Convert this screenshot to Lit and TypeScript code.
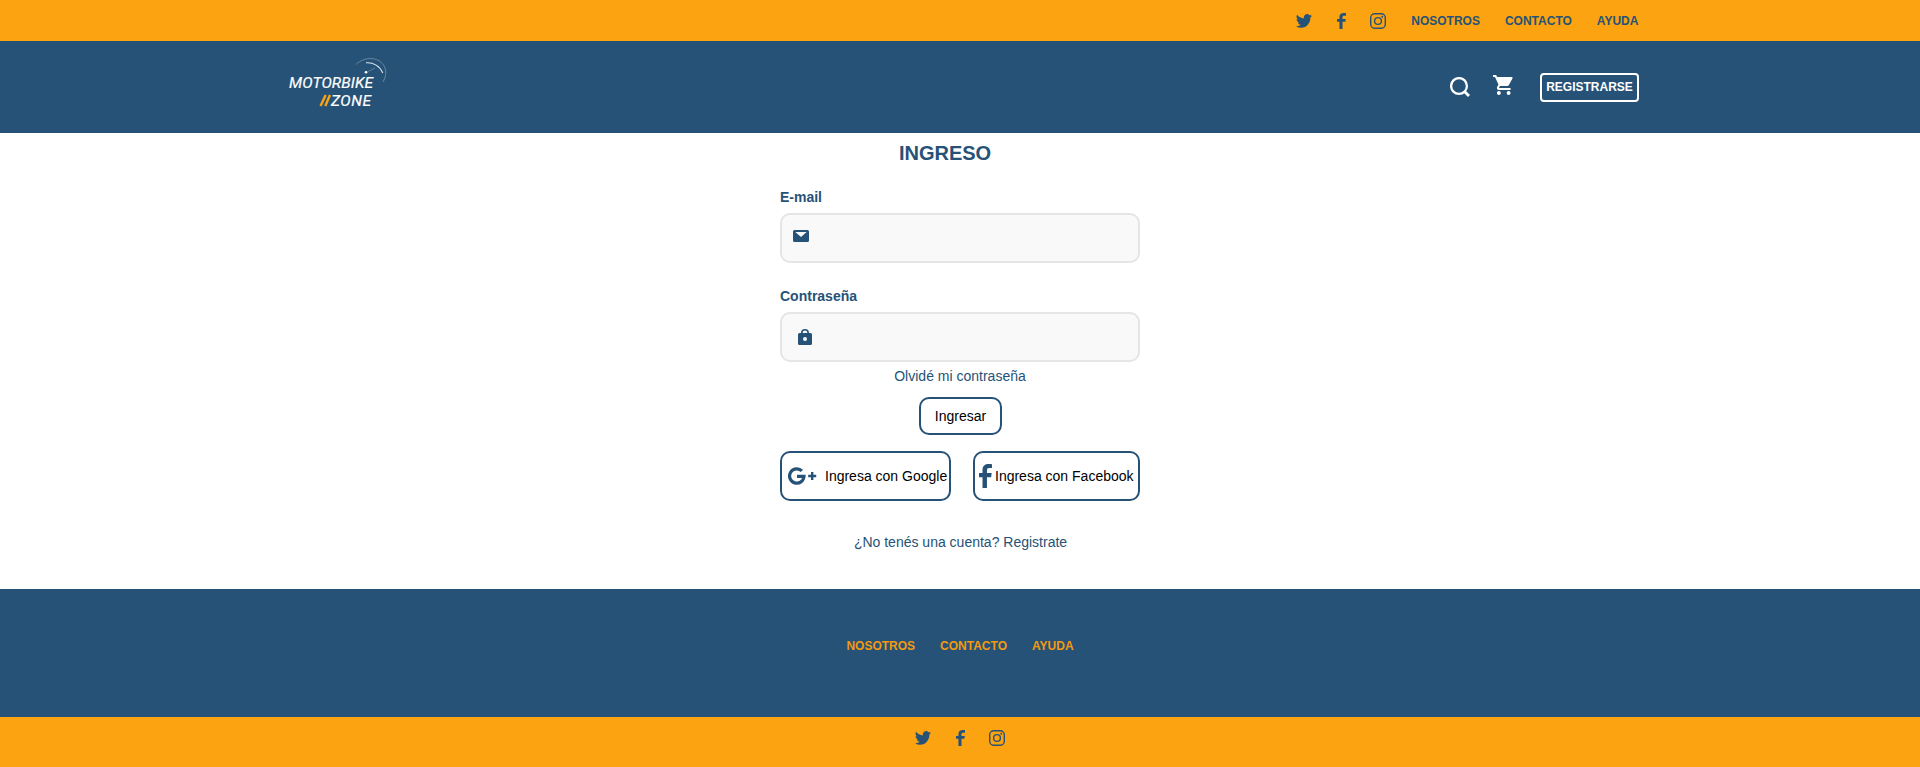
import { LitElement, html, css, svg } from "lit";
import { customElement } from "lit/decorators.js";

const twitter = svg`<path d="M23.95 4.57a10 10 0 0 1-2.82.77 4.96 4.96 0 0 0 2.16-2.72c-.95.55-2 .95-3.13 1.18a4.92 4.92 0 0 0-8.38 4.48C7.69 8.1 4.07 6.13 1.64 3.16a4.92 4.92 0 0 0 1.52 6.57 4.9 4.9 0 0 1-2.23-.61v.06a4.92 4.92 0 0 0 3.95 4.83 5 5 0 0 1-2.21.08 4.94 4.94 0 0 0 4.6 3.42A9.87 9.87 0 0 1 0 19.54a13.99 13.99 0 0 0 7.55 2.21c9.05 0 14-7.5 14-13.98 0-.21 0-.42-.02-.63a9.94 9.94 0 0 0 2.46-2.55z"/>`;
const facebook = svg`<path d="M5.2 16V8.8H7.9L8.3 6H5.2V4.2c0-.9.4-1.5 1.6-1.5H8.5V.1C8.2.1 7.300 0 6.300 0 4 0 2.300 1.300 2.300 3.800V6H0v2.800h2.300V16z"/>`;
const instagram = svg`<rect x=".7" y=".7" width="14.6" height="14.600" rx="4" fill="none" stroke="currentColor" stroke-width="1.400"/><circle cx="8" cy="8" r="3.400" fill="none" stroke="currentColor" stroke-width="1.400"/><circle cx="12.300" cy="3.700" r=".95"/>`;

const socials = () => html`
  <svg class="tw" viewBox="0 2 24 20" preserveAspectRatio="none">${twitter}</svg>
  <svg class="fb" viewBox="0 0 8.5 16" preserveAspectRatio="none">${facebook}</svg>
  <svg class="ig" viewBox="0 0 16 16">${instagram}</svg>`;

const links = () => html`<a>NOSOTROS</a><a>CONTACTO</a><a>AYUDA</a>`;

@customElement("app-root")
export class AppRoot extends LitElement {
  static styles = css`
    :host { display: block; height: 767px; background: #fff; color: #265277; font: 14px/16px "Liberation Sans", Arial, sans-serif; }
    * { box-sizing: border-box; }
    svg { display: block; fill: currentColor; flex: none; }
    .socials { display: flex; align-items: center; }
    .tw { width: 16px; height: 14px; }
    .fb { width: 9px; height: 16px; margin-left: 25px; }
    .ig { width: 16px; height: 16px; margin-left: 24px; }
    .links { display: flex; gap: 25px; font-size: 12px; font-weight: 700; line-height: 14px; }
    .top { height: 41px; background: #fca311; display: flex; justify-content: flex-end; align-items: center; padding: 0 281.6px 0 0; }
    .top .links { margin-left: 25px; }
    .head { height: 92px; background: #265277; color: #fff; display: flex; justify-content: space-between; align-items: flex-start; padding: 14px 281px 0 285px; }
    .logo { width: 110px; height: 60px; }
    .logo text { font-family: Roboto, sans-serif; font-style: italic; font-weight: 400; fill: #fff; stroke: #fff; stroke-width: .2px; }
    .tools { display: flex; align-items: flex-start; }
    .search { width: 20px; height: 20px; margin-top: 22px; }
    .cart { width: 20px; height: 20px; margin: 20px 0 0 23px; }
    .register { width: 99px; height: 29px; margin: 18px 0 0 27px; border: 2px solid #fff; border-radius: 4px; font-size: 12px; font-weight: 700; line-height: 24px; text-align: center; }
    .main { height: 456px; width: 360px; margin: 0 auto; display: flex; flex-direction: column; align-items: center; }
    h1 { margin: 8px 30px 0 0; font-size: 20px; line-height: 24px; }
    label { align-self: flex-start; font-weight: 700; }
    .l1 { margin-top: 24px; }
    .l2 { margin-top: 25px; }
    .field { width: 360px; height: 50px; margin-top: 8px; border: 2px solid #e5e5e5; border-radius: 10px; background: #f9f9f9; }
    .mail { width: 16px; height: 12px; margin: 15px 0 0 11px; }
    .lock { width: 14px; height: 16px; margin: 15px 0 0 16px; }
    .forgot { margin-top: 6px; }
    .btn { border: 2px solid #265277; border-radius: 10px; color: #000; display: flex; align-items: center; white-space: nowrap; }
    .enter { width: 83px; height: 38px; margin-top: 13px; justify-content: center; padding-left: 1px; }
    .row { display: flex; justify-content: space-between; width: 360px; margin-top: 16px; }
    .row .btn { height: 50px; }
    .row svg { color: #265277; }
    .google { width: 171px; padding-left: 6px; }
    .gplus { width: 29px; height: 18px; margin-right: 8px; }
    .face { width: 166.600px; padding-left: 3.600px; }
    .f { width: 13px; height: 24px; margin-right: 3px; }
    .signup { margin: 33px 0 0 1px; }
    .foot { height: 128px; background: #265277; color: #f39a0f; display: flex; justify-content: center; padding-top: 50px; }
    .bottom { height: 50px; background: #fca311; display: flex; justify-content: center; align-items: flex-start; padding-top: 13px; }
  `;

  render() {
    return html`
      <div class="top">
        <div class="socials">${socials()}</div>
        <nav class="links">${links()}</nav>
      </div>
      <header class="head">
        <svg class="logo" viewBox="285 55 110 60">
          <text x="289" y="88" font-size="15.500" textLength="84" lengthAdjust="spacing">MOTORBIKE</text>
          <text x="331" y="105.800" font-size="15.500" textLength="40" lengthAdjust="spacing">ZONE</text>
          <path d="M320.500 106 325.700 95M325.300 106 330 95" stroke="#fca311" stroke-width="2.400"/>
          <path d="M366 62.800A16.500 16.500 0 0 1 382.800 73" fill="none" stroke="#dce5ec" stroke-width="1.100"/>
          <path d="M356 64.500C364 56.500 378 56.500 383.500 65C387 70 386 77 383 82" fill="none" stroke="#7893aa" stroke-width=".8"/>
          <path d="M366.500 72.300 375 68" stroke="#7791a8" stroke-width=".7"/>
          <circle cx="366" cy="72.300" r="1.300" fill="#fff"/>
        </svg>
        <div class="tools">
          <svg class="search" viewBox="0 0 20 20"><circle cx="9" cy="9" r="7.900" fill="none" stroke="currentColor" stroke-width="2.300"/><path d="m14.500 14.500 4.500 4.500" stroke="currentColor" stroke-width="2.800"/></svg>
          <svg class="cart" viewBox="1 2 20.500 20" preserveAspectRatio="none"><path d="M7 18c-1.100 0-1.990.9-1.990 2S5.900 22 7 22s2-.9 2-2-.9-2-2-2zM1 2v2h2l3.600 7.590-1.350 2.450c-.16.28-.25.61-.25.96 0 1.100.9 2 2 2h12v-2H7.420c-.14 0-.25-.11-.25-.25l.03-.12.9-1.630h7.450c.75 0 1.410-.41 1.750-1.030l3.580-6.490A1 1 0 0 0 20 4H5.210l-.94-2H1zm16 16c-1.100 0-1.990.9-1.990 2s.89 2 1.990 2 2-.9 2-2-.9-2-2-2z"/></svg>
          <div class="register">REGISTRARSE</div>
        </div>
      </header>
      <main class="main">
        <h1>INGRESO</h1>
        <label class="l1">E-mail</label>
        <div class="field"><svg class="mail" viewBox="0 0 16 12"><path fill-rule="evenodd" d="M1.500 0h13A1.500 1.500 0 0 1 16 1.500v9a1.500 1.500 0 0 1-1.500 1.500h-13A1.500 1.500 0 0 1 0 10.500v-9A1.500 1.500 0 0 1 1.500 0zM2.300 2 8 7l5.700-5z"/></svg></div>
        <label class="l2">Contraseña</label>
        <div class="field"><svg class="lock" viewBox="0 0 14 16"><path fill-rule="evenodd" d="M1.500 4H3a4 4 0 0 1 8 0h1.500A1.500 1.500 0 0 1 14 5.500v9a1.500 1.500 0 0 1-1.500 1.500h-11A1.500 1.500 0 0 1 0 14.500v-9A1.500 1.500 0 0 1 1.500 4zM4.600 4h4.800a2.400 2.400 0 0 0-4.800 0zM7 8a2 2 0 1 0 0 4 2 2 0 0 0 0-4z"/></svg></div>
        <a class="forgot">Olvidé mi contraseña</a>
        <div class="btn enter">Ingresar</div>
        <div class="row">
          <div class="btn google"><svg class="gplus" viewBox="0 0 29 18"><path d="M13.900 3.900A7.200 7.200 0 1 0 16 9.300H9" fill="none" stroke="currentColor" stroke-width="3.200"/><path d="M24.200 5v8M20.200 9h8" stroke="currentColor" stroke-width="2.400"/></svg>Ingresa con Google</div>
          <div class="btn face"><svg class="f" viewBox="0 0 8.500 16" preserveAspectRatio="none">${facebook}</svg>Ingresa con Facebook</div>
        </div>
        <a class="signup">¿No tenés una cuenta? Registrate</a>
      </main>
      <footer>
        <div class="foot"><nav class="links">${links()}</nav></div>
        <div class="bottom"><div class="socials">${socials()}</div></div>
      </footer>`;
  }
}
